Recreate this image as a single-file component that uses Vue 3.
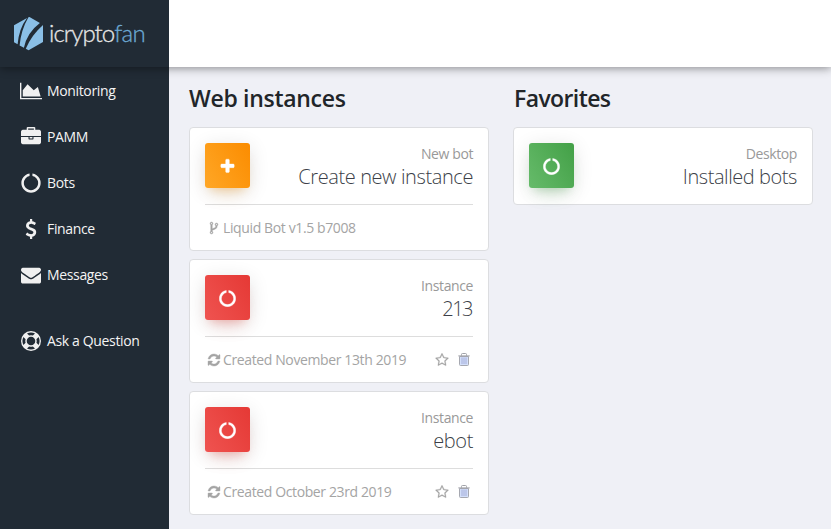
<script setup>
const icons = {
  area: { w: 2048, d: 'M2048 1536v128h-2048v-1536h128v1408h1920zm-384-1024l256 896h-1664v-576l448-576 576 576z' },
  briefcase: { w: 1792, d: 'M640 256h512v-128h-512v128zm1152 640v480q0 66-47 113t-113 47h-1472q-66 0-113-47t-47-113v-480h672v160q0 26 19 45t45 19h320q26 0 45-19t19-45v-160h672zm-768 0v128h-256v-128h256zm768-480v384h-1792v-384q0-66 47-113t113-47h352v-160q0-40 28-68t68-28h576q40 0 68 28t28 68v160h352q66 0 113 47t47 113z' },
  notch: { w: 1792, d: 'M1760 896q0 176-68.5 336t-184 275.5-275.5 184-336 68.5-336-68.5-275.5-184-184-275.5-68.5-336q0-213 97-398.5t265-305.5 374-151v228q-221 45-366.5 221t-145.5 406q0 130 51 248.5t136.5 204 204 136.5 248.5 51 248.5-51 204-136.5 136.5-204 51-248.5q0-230-145.5-406t-366.5-221v-228q206 31 374 151t265 305.5 97 398.5z' },
  dollar: { w: 1792, d: 'M1362 1185q0 153-99.5 263.5t-258.5 136.5v175q0 14-9 23t-23 9h-135q-13 0-22.5-9.5t-9.5-22.5v-175q-66-9-127.5-31t-101.5-44.5-74-48-46.5-37.5-17.5-18q-17-21-2-41l103-135q7-10 23-12 15-2 24 9l2 2q113 99 243 125 37 8 74 8 81 0 142.5-43t61.5-122q0-28-15-53t-33.5-42-58.5-37.5-66-32-80-32.5q-39-16-61.5-25t-61.5-26.5-62.5-31-56.5-35.5-53.5-42.5-43.5-49-35.5-58-21-66.5-8.5-78q0-138 98-242t255-134v-180q0-13 9.5-22.5t22.5-9.5h135q14 0 23 9t9 23v176q57 6 110.5 23t87 33.5 63.5 37.5 39 29 15 14q17 18 5 38l-81 146q-8 15-23 16-14 3-27-7-3-3-14.5-12t-39-26.5-58.5-32-74.5-26-85.5-11.5q-95 0-155 43t-60 111q0 26 8.5 48t29.5 41.5 39.5 33 56 31 60.5 27 70 27.5q53 20 81 31.5t76 35 75.5 42.5 62 50 53 63.5 31.5 76.5 13 94z' },
  envelope: { w: 1792, d: 'M1792 710v794q0 66-47 113t-113 47h-1472q-66 0-113-47t-47-113v-794q44 49 101 87 362 246 497 345 57 42 92.5 65.5t94.5 48 110 24.5h2q51 0 110-24.5t94.5-48 92.5-65.5q170-123 498-345 57-39 100-87zm0-294q0 79-49 151t-122 123q-376 261-468 325-10 7-42.5 31t-54 38.5-52 32.5-57.5 27-50 9h-2q-23 0-50-9t-57.5-27-52-32.5-54-38.5-42.5-31q-91-64-262-182.5t-205-142.5q-62-42-117-115.5t-55-136.5q0-78 41.5-130t118.5-52h1472q65 0 112.5 47t47.5 113z' },
  ring: { w: 1792, d: 'M896 0a896 896 0 1 0 0 1792a896 896 0 1 0 0-1792zm0 128q190 0 361 90l-194 194q-82-28-167-28t-167 28l-194-194q171-90 361-90zm-678 1129q-90-171-90-361t90-361l194 194q-28 82-28 167t28 167zm678 407q-190 0-361-90l194-194q82 28 167 28t167-28l194 194q-171 90-361 90zm0-384a384 384 0 1 1 0-768a384 384 0 1 1 0 768zm484-217q28-82 28-167t-28-167l194-194q90 171 90 361t-90 361z' },
  plus: { w: 1792, d: 'M1600 736v192q0 40-28 68t-68 28h-416v416q0 40-28 68t-68 28h-192q-40 0-68-28t-28-68v-416h-416q-40 0-68-28t-28-68v-192q0-40 28-68t68-28h416v-416q0-40 28-68t68-28h192q40 0 68 28t28 68v416h416q40 0 68 28t28 68z' },
  refresh: { w: 1792, d: 'M1639 1056q0 5-1 7-64 268-268 434.5t-478 166.5q-146 0-282.5-55t-243.5-157l-129 129q-19 19-45 19t-45-19-19-45v-448q0-26 19-45t45-19h448q26 0 45 19t19 45-19 45l-137 137q71 66 161 102t187 36q134 0 250-65t186-179q11-17 53-117 8-23 30-23h192q13 0 22.5 9.5t9.5 22.5zm25-800v448q0 26-19 45t-45 19h-448q-26 0-45-19t-19-45 19-45l138-138q-148-137-349-137-134 0-250 65t-186 179q-11 17-53 117-8 23-30 23h-199q-13 0-22.5-9.5t-9.5-22.5v-7q65-268 270-434.5t480-166.5q146 0 284 55.5t245 156.5l130-129q19-19 45-19t45 19 19 45z' },
  fork: { w: 1792, d: 'M672 1472q0-40-28-68t-68-28-68 28-28 68 28 68 68 28 68-28 28-68zm0-1152q0-40-28-68t-68-28-68 28-28 68 28 68 68 28 68-28 28-68zm640 128q0-40-28-68t-68-28-68 28-28 68 28 68 68 28 68-28 28-68zm96 0q0 52-26 96.5t-70 69.5q-2 287-226 414-67 38-203 81-128 40-169.5 71t-41.5 100v26q44 25 70 69.5t26 96.5q0 80-56 136t-136 56-136-56-56-136q0-52 26-96.5t70-69.5v-820q-44-25-70-69.5t-26-96.5q0-80 56-136t136-56 136 56 56 136q0 52-26 96.5t-70 69.5v497q54-26 154-57 55-17 87.5-29.5t70.5-31 59-39.5 40.5-51 28-69.5 8.5-91.5q-44-25-70-69.5t-26-96.5q0-80 56-136t136-56 136 56 56 136z' },
  star: { w: 1792, d: 'M1201 1004l306-297-422-62-189-382-189 382-422 62 306 297-73 421 378-199 377 199zm527-357q0 22-26 48l-363 354 86 500q1 7 1 20 0 50-41 50-19 0-40-12l-449-236-449 236q-22 12-40 12-21 0-31.5-14.5t-10.5-35.5q0-6 2-20l86-500-364-354q-25-27-25-48 0-37 56-46l502-73 225-455q19-41 49-41t49 41l225 455 502 73q56 9 56 46z' },
}

const menu = [
  { label: 'Monitoring', icon: 'area', cls: 'm1' },
  { label: 'PAMM', icon: 'briefcase', cls: 'm2' },
  { label: 'Bots', icon: 'notch', cls: 'm3' },
  { label: 'Finance', icon: 'dollar', cls: 'm4' },
  { label: 'Messages', icon: 'envelope', cls: 'm5' },
  { label: 'Ask a Question', icon: 'ring', cls: 'ask' },
]

const columns = [
  {
    title: 'Web instances',
    cls: 'web',
    cards: [
      { kind: 'New bot', name: 'Create new instance', icon: 'plus', color: 'orange', foot: 'Liquid Bot v1.5 b7008', footIcon: 'fork', fit: 'f1' },
      { kind: 'Instance', name: '213', icon: 'notch', color: 'red', foot: 'Created November 13th 2019', footIcon: 'refresh', actions: true, fit: 'f2' },
      { kind: 'Instance', name: 'ebot', icon: 'notch', color: 'red', foot: 'Created October 23rd 2019', footIcon: 'refresh', actions: true, fit: 'f3' },
    ],
  },
  {
    title: 'Favorites',
    cls: 'fav',
    cards: [{ kind: 'Desktop', name: 'Installed bots', icon: 'notch', color: 'green', fit: 'f4' }],
  },
]
</script>

<template>
  <div class="app">
    <header class="topbar">
      <div class="brand">
        <svg class="logo" width="30" height="34" viewBox="0 0 30 34">
          <g fill="#8abfe6">
            <path d="M0 8.2 13 1Q5 11.5 3.6 27.3L0 25.3z" />
            <path d="M14.4.2 15.5 0 25.9 5.9Q13 15.5 9.9 30.8L5.6 28.5Q7 13 14.4.2z" />
            <path d="M29 7.9V25L14.6 33.2 11.8 31.8Q17 18.5 29 7.9z" />
          </g>
        </svg>
        <div class="word"><span class="w1">icrypto</span><span class="w2">fan</span></div>
      </div>
    </header>
    <div class="body">
      <nav class="side">
        <a v-for="m in menu" :key="m.label" class="item" :class="m.cls">
          <span class="mi">
            <svg :class="{ wide: m.icon === 'area' }" :viewBox="`0 0 ${icons[m.icon].w} 1792`"><path fill-rule="evenodd" :d="icons[m.icon].d" /></svg>
          </span>
          <span class="label">{{ m.label }}</span>
        </a>
      </nav>
      <main class="main">
        <section v-for="c in columns" :key="c.title" class="col" :class="c.cls">
          <h2>{{ c.title }}</h2>
          <article v-for="k in c.cards" :key="k.name" class="card" :class="k.fit">
            <div class="top">
              <div class="tile" :class="k.color">
                <svg viewBox="0 0 1792 1792"><path :d="icons[k.icon].d" /></svg>
              </div>
              <div class="info">
                <div class="kind">{{ k.kind }}</div>
                <div class="name">{{ k.name }}</div>
              </div>
            </div>
            <div v-if="k.foot" class="foot">
              <svg class="fi" viewBox="0 0 1792 1792"><path :d="icons[k.footIcon].d" /></svg>
              <span class="ftext">{{ k.foot }}</span>
              <span v-if="k.actions" class="actions">
                <svg class="star" viewBox="0 0 1792 1792"><path :d="icons.star.d" /></svg>
                <svg class="trash" viewBox="0 0 12 13">
                  <path d="M1.5 3.5h9v8q0 1-1 1h-7q-1 0-1-1z" fill="#d3dffa" stroke="#a6a8b0" />
                  <path d="M.3 2.9h11.4M3.5 2.7V1.4q0-.9.9-.9h3.2q.9 0 .9.9v1.3" fill="none" stroke="#a0a2a8" />
                  <path d="M4 4.5v6.5M6 4.5v6.5M8 4.5v6.5" stroke="#9fa9d6" stroke-width=".9" />
                </svg>
              </span>
            </div>
          </article>
        </section>
      </main>
    </div>
  </div>
</template>

<style>
body { background: #eff0f6; overflow: hidden; }
</style>

<style scoped>
* { box-sizing: border-box; }
.app { width: 831px; height: 529px; display: flex; flex-direction: column; font-family: "Open Sans", "Noto Sans", sans-serif; background: #eff0f6; overflow: hidden; }
.topbar { height: 67px; flex: none; background: #fff; box-shadow: 0 1px 9px rgba(0, 0, 0, .45); position: relative; z-index: 2; }
.brand { width: 169px; height: 67px; background: #212b35; padding: 17px 0 0 14px; display: flex; align-items: flex-start; }
.logo { display: block; flex: none; margin-right: 5px; }
.word { display: flex; font-family: Lato, sans-serif; font-weight: 300; font-size: 24px; line-height: 31px; color: #e6e6e6; -webkit-text-stroke: .3px currentColor; }
.w1 { letter-spacing: -.95px; }
.w2 { color: #6ca9d4; letter-spacing: -.7px; }
.body { flex: 1; display: flex; min-height: 0; }
.side { width: 169px; background: #212b35; padding: 1px 0 0 20px; }
.item { height: 46px; display: flex; align-items: center; color: #f4f4f4; font-size: 14px; }
.ask { margin-top: 20px; }
.mi { width: 22px; height: 20px; display: flex; justify-content: center; flex: none; margin-right: 5px; }
.mi svg { width: 20px; height: 20px; fill: #f0f0f0; flex: none; }
.mi svg.wide { width: 22px; height: 20px; }
.label { white-space: nowrap; letter-spacing: -.35px; padding-bottom: 1px; }
.main { flex: 1; display: flex; gap: 24px; padding: 15px 0 0 20px; }
.col { width: 300px; display: flex; flex-direction: column; gap: 8px; flex: none; }
h2 { margin: 0 0 1px; height: 36px; line-height: 33px; font-size: 23px; font-weight: 600; color: #212529; letter-spacing: -.3px; white-space: nowrap; }
.fav h2 { letter-spacing: -.6px; padding-left: 1px; }
.card { background: #fff; border: 1px solid #dcdde0; border-radius: 4px; padding: 15px; flex: none; }
.top { display: flex; justify-content: space-between; height: 46px; }
.tile { width: 45px; height: 45px; border-radius: 3px; display: flex; align-items: center; justify-content: center; flex: none; padding-top: 1px; }
.tile svg { width: 17px; height: 17px; fill: #fff; stroke: #fff; stroke-width: 40; }
.orange { background: linear-gradient(60deg, #ffa726, #fb8c00); box-shadow: 0 12px 20px -10px rgba(255, 152, 0, .28), 0 4px 20px rgba(0, 0, 0, .12), 0 7px 8px -5px rgba(255, 152, 0, .2); }
.red { background: linear-gradient(60deg, #ef5350, #e53935); box-shadow: 0 12px 20px -10px rgba(244, 67, 54, .28), 0 4px 20px rgba(0, 0, 0, .12), 0 7px 8px -5px rgba(244, 67, 54, .2); }
.green { background: linear-gradient(60deg, #66bb6a, #43a047); box-shadow: 0 12px 20px -10px rgba(76, 175, 80, .28), 0 4px 20px rgba(0, 0, 0, .12), 0 7px 8px -5px rgba(76, 175, 80, .2); }
.info { text-align: right; white-space: nowrap; }
.kind { color: #999; font-size: 14px; line-height: 21px; letter-spacing: -.4px; }
.name { color: #3c3f48; font-size: 20px; line-height: 26px; font-weight: 300; letter-spacing: -.4px; }
.f2 .name { letter-spacing: -1.5px; padding-right: 1px; }
.f4 .name { letter-spacing: -.43px; }
.foot { display: flex; align-items: center; height: 46px; margin: 15px 0 -15px; border-top: 1px solid #ddd; padding: 0 2px 0 2px; color: #a4a4a4; font-size: 14px; }
.fi { width: 14px; height: 14px; fill: #a4a4a4; stroke: #a4a4a4; stroke-width: 50; margin-right: 2px; flex: none; }
.ftext { white-space: nowrap; letter-spacing: -.38px; }
.actions { margin-left: auto; display: flex; align-items: center; gap: 9px; padding-right: 1px; }
.star { width: 14px; height: 14px; fill: #a4a4a4; stroke: #a4a4a4; stroke-width: 30; }
.trash { width: 12px; height: 13px; }
</style>
